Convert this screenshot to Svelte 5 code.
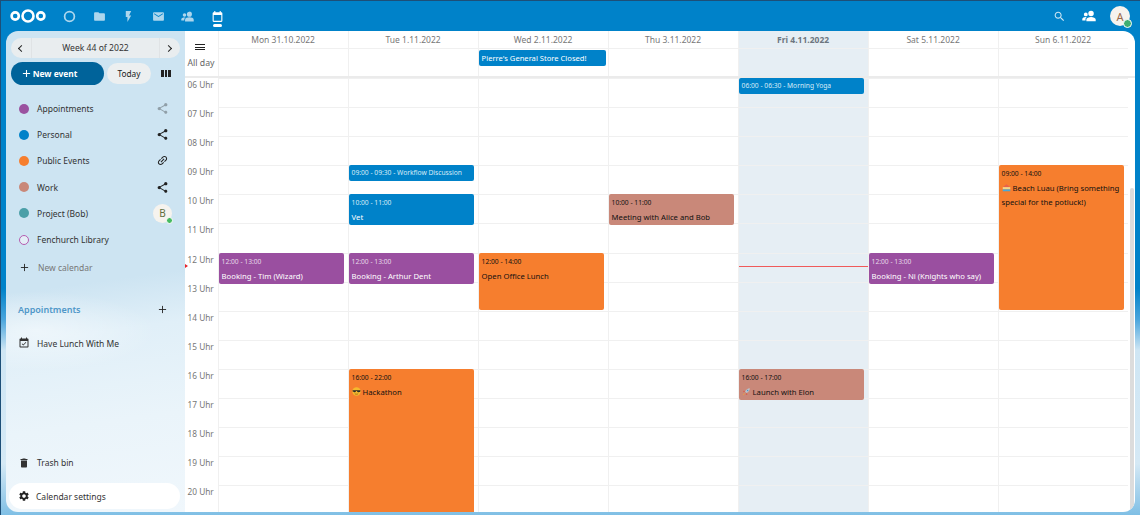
<script lang="ts">
	const icons = {
		folder: 'M10 4H4c-1.1 0-2 .9-2 2v12c0 1.1.9 2 2 2h16c1.1 0 2-.9 2-2V8c0-1.1-.9-2-2-2h-8l-2-2z',
		bolt: 'M7 2v11h3v9l7-12h-4l4-8z',
		mail: 'M20 4H4c-1.1 0-2 .9-2 2v12c0 1.1.9 2 2 2h16c1.1 0 2-.9 2-2V6c0-1.1-.9-2-2-2zm0 4l-8 5-8-5V6l8 5 8-5v2z',
		group: 'M15.500 3a4.700 4.700 0 1 1 0 9.400 4.700 4.700 0 0 1 0-9.400zM6.500 6a3.300 3.300 0 1 1 0 6.600 3.300 3.300 0 0 1 0-6.600zM15.500 13.500c3.800 0 8 1.600 8 4.300V21H7.500v-3.200c0-2.700 4.200-4.300 8-4.300zM6.500 13.800c.6 0 1.200 0 1.700.1-1.300 1-2.200 2.300-2.200 3.900v1.700H.5v-2.300c0-2.200 3-3.400 6-3.400z',
		calendar: 'M19 4h-1V2h-2v2H8V2H6v2H5c-1.11 0-2 .9-2 2v14c0 1.1.89 2 2 2h14c1.1 0 2-.9 2-2V6c0-1.1-.9-2-2-2zm0 16H5V9h14v11z',
		share: 'M18 16.08c-.76 0-1.44.3-1.96.77L8.91 12.7c.05-.23.09-.46.09-.7s-.04-.47-.09-.7l7.05-4.11c.54.5 1.25.81 2.04.81 1.66 0 3-1.34 3-3s-1.34-3-3-3-3 1.34-3 3c0 .24.04.47.09.7L8.04 9.81C7.5 9.31 6.79 9 6 9c-1.66 0-3 1.34-3 3s1.34 3 3 3c.79 0 1.5-.31 2.04-.81l7.12 4.16c-.05.21-.08.43-.08.65 0 1.61 1.31 2.92 2.92 2.92s2.92-1.31 2.92-2.92-1.31-2.92-2.92-2.92z',
		link: 'M3.9 12c0-1.71 1.39-3.1 3.1-3.1h4V7H7c-2.76 0-5 2.24-5 5s2.24 5 5 5h4v-1.9H7c-1.71 0-3.1-1.39-3.1-3.1zM8 13h8v-2H8v2zm9-6h-4v1.9h4c1.71 0 3.1 1.39 3.1 3.1s-1.39 3.1-3.1 3.1h-4V17h4c2.76 0 5-2.24 5-5s-2.24-5-5-5z',
		trash: 'M6 19c0 1.1.9 2 2 2h8c1.1 0 2-.9 2-2V7H6v12zM19 4h-3.5l-1-1h-5l-1 1H5v2h14V4z',
		cog: 'M19.14 12.94c.04-.3.06-.61.06-.94 0-.32-.02-.64-.07-.94l2.03-1.58c.18-.14.23-.41.12-.61l-1.92-3.32c-.12-.22-.37-.29-.59-.22l-2.39.96c-.5-.38-1.03-.7-1.62-.94l-.36-2.54c-.04-.24-.24-.41-.48-.41h-3.84c-.24 0-.43.17-.47.41l-.36 2.54c-.59.24-1.13.57-1.62.94l-2.39-.96c-.22-.08-.47 0-.59.22L2.74 8.87c-.12.21-.08.47.12.61l2.03 1.58c-.05.3-.09.63-.09.94s.02.64.07.94l-2.03 1.58c-.18.14-.23.41-.12.61l1.92 3.32c.12.22.37.29.59.22l2.39-.96c.5.38 1.03.7 1.62.94l.36 2.54c.05.24.24.41.48.41h3.84c.24 0 .44-.17.47-.41l.36-2.54c.59-.24 1.13-.56 1.62-.94l2.39.96c.22.08.47 0 .59-.22l1.92-3.32c.12-.22.07-.47-.12-.61l-2.01-1.58zM12 15.6c-1.98 0-3.6-1.62-3.6-3.6s1.62-3.6 3.6-3.6 3.6 1.62 3.6 3.6-1.62 3.6-3.6 3.6z',
		search: 'M15.5 14h-.79l-.28-.27C15.41 12.59 16 11.11 16 9.5 16 5.91 13.09 3 9.5 3S3 5.91 3 9.5 5.91 16 9.5 16c1.61 0 3.09-.59 4.23-1.57l.27.28v.79l5 4.99L20.49 19l-4.99-5zm-6 0C7.01 14 5 11.99 5 9.5S7.01 5 9.5 5 14 7.01 14 9.5 11.99 14 9.5 14z',
		check: 'M16.53 11.06L15.47 10l-4.88 4.88-2.12-2.12-1.06 1.06L10.59 17l5.94-5.94zM19 3h-1V1h-2v2H8V1H6v2H5c-1.11 0-1.99.9-1.99 2L3 19c0 1.1.89 2 2 2h14c1.1 0 2-.9 2-2V5c0-1.1-.9-2-2-2zm0 16H5V8h14v11z'
	};

	const calendars = [
		{ name: 'Appointments', color: '#9a52a0', action: 'share-off' },
		{ name: 'Personal', color: '#0082c9', action: 'share' },
		{ name: 'Public Events', color: '#f67e2e', action: 'link' },
		{ name: 'Work', color: '#c98879', action: 'share' },
		{ name: 'Project (Bob)', color: '#4b9fa8', action: 'avatar' },
		{ name: 'Fenchurch Library', color: '', action: '' }
	];

	const days = [
		'Mon 31.10.2022',
		'Tue 1.11.2022',
		'Wed 2.11.2022',
		'Thu 3.11.2022',
		'Fri 4.11.2022',
		'Sat 5.11.2022',
		'Sun 6.11.2022'
	];
	const todayIndex = 4;
	const hourHeight = 29.1;
	const hours = ['06', '07', '08', '09', '10', '11', '12', '13', '14', '15', '16', '17', '18', '19', '20'];

	const blue = 'blue', purple = 'purple', orange = 'orange', salmon = 'salmon';
	const events = [
		{ day: 4, start: 6, end: 6.5, time: '06:00 - 06:30', title: 'Morning Yoga', kind: blue },
		{ day: 1, start: 9, end: 9.5, time: '09:00 - 09:30', title: 'Workflow Discussion', kind: blue },
		{ day: 1, start: 10, end: 11, time: '10:00 - 11:00', title: 'Vet', kind: blue },
		{ day: 3, start: 10, end: 11, time: '10:00 - 11:00', title: 'Meeting with Alice and Bob', kind: salmon },
		{ day: 0, start: 12, end: 13, time: '12:00 - 13:00', title: 'Booking - Tim (Wizard)', kind: purple },
		{ day: 1, start: 12, end: 13, time: '12:00 - 13:00', title: 'Booking - Arthur Dent', kind: purple },
		{ day: 2, start: 12, end: 14, time: '12:00 - 14:00', title: 'Open Office Lunch', kind: orange },
		{ day: 5, start: 12, end: 13, time: '12:00 - 13:00', title: 'Booking - Ni (Knights who say)', kind: purple },
		{ day: 6, start: 9, end: 14, time: '09:00 - 14:00', title: 'Beach Luau (Bring something special for the potluck!)', kind: orange, emoji: 'beach' },
		{ day: 1, start: 16, end: 22, time: '16:00 - 22:00', title: 'Hackathon', kind: orange, emoji: 'cool' },
		{ day: 4, start: 16, end: 17, time: '16:00 - 17:00', title: 'Launch with Elon', kind: salmon, emoji: 'rocket' }
	];

	const eventsFor = (day: number) => events.filter((e) => e.day === day);
	const top = (e: { start: number }) => (e.start - 6) * hourHeight;
	const height = (e: { start: number; end: number }) =>
		e.end - e.start <= 0.5 ? 16 : Math.max((e.end - e.start) * hourHeight - 0.4, 31);
</script>

{#snippet icon(path: string, cls = '')}
	<svg class="icon {cls}" viewBox="0 0 24 24" aria-hidden="true"><path d={path} /></svg>
{/snippet}

{#snippet plus(cls = '')}
	<svg class="plus {cls}" viewBox="0 0 10 10" aria-hidden="true"><path d="M5 1v8M1 5h8" /></svg>
{/snippet}

{#snippet emoji(name: string)}
	<svg class="emoji" viewBox="0 0 12 12" aria-hidden="true">
		{#if name === 'cool'}
			<circle cx="6" cy="6" r="5.6" fill="#f5b82e" />
			<path d="M.8 4.2h10.4v1.2c0 1-1 1.6-2.2 1.6S6.8 6.200 6.600 5.200h-1.200C5.200 6.200 4.200 7 3 7S.8 6.400.8 5.400z" fill="#2b2b2b" />
			<path d="M3.800 9c1.400.8 3 .8 4.400 0" stroke="#7a4a12" stroke-width=".8" fill="none" />
		{:else if name === 'beach'}
			<path d="M1 5.500 6 1.500l5 4z" fill="#e8614d" />
			<rect x="1" y="5.500" width="10" height="3" fill="#f2d58a" />
			<rect x="1" y="8.500" width="10" height="2.500" fill="#4aa8d8" />
		{:else}
			<path d="M10.500 1.500c-3 .2-5 1.800-6.400 4.400l2 2c2.600-1.400 4.200-3.400 4.400-6.400z" fill="#b9c3cc" />
			<circle cx="7.500" cy="4.500" r="1" fill="#4a90c9" />
			<path d="M4 6 1.500 7l1-2.500zM6 8 5 10.500 7.500 9.500z" fill="#d9503f" />
			<path d="M3.500 8.500 1.500 10.500" stroke="#f2a33a" stroke-width="1.200" />
		{/if}
	</svg>
{/snippet}

<div class="app">
	<header class="topbar">
		<svg class="logo" viewBox="0 0 36 18" aria-hidden="true">
			<circle cx="5.200" cy="9" r="3.600" />
			<circle cx="18" cy="9" r="5.500" />
			<circle cx="30.800" cy="9" r="3.600" />
		</svg>
		<nav class="apps">
			<span class="app-slot dim"><svg class="icon ring" viewBox="0 0 24 24" aria-hidden="true"><circle cx="12" cy="12" r="9" /></svg></span>
			<span class="app-slot dim">{@render icon(icons.folder)}</span>
			<span class="app-slot dim">{@render icon(icons.bolt)}</span>
			<span class="app-slot dim">{@render icon(icons.mail)}</span>
			<span class="app-slot dim">{@render icon(icons.group)}</span>
			<span class="app-slot active">{@render icon(icons.calendar)}</span>
		</nav>
		<div class="top-right">
			<span class="search">{@render icon(icons.search)}</span>
			<span class="contacts">{@render icon(icons.group)}</span>
			<span class="avatar big">A<i class="status"></i></span>
		</div>
	</header>

	<div class="content">
		<aside class="sidebar">
			<div class="week-pill">
				<span class="chev left"></span>
				<span class="week-label">Week 44 of 2022</span>
				<span class="chev right"></span>
			</div>
			<div class="actions">
				<button class="new-event">{@render plus('white')} New event</button>
				<button class="today">Today</button>
				<span class="view-icon"><i></i><i></i><i></i></span>
			</div>

			<ul class="cal-list">
				{#each calendars as cal}
					<li class="cal-row">
						{#if cal.color}
							<span class="dot" style="background: {cal.color}"></span>
						{:else}
							<span class="dot hollow"></span>
						{/if}
						<span class="cal-name">{cal.name}</span>
						{#if cal.action === 'share' || cal.action === 'share-off'}
							<span class="cal-action" class:faded={cal.action === 'share-off'}>{@render icon(icons.share)}</span>
						{:else if cal.action === 'link'}
							<span class="cal-action link">{@render icon(icons.link)}</span>
						{:else if cal.action === 'avatar'}
							<span class="avatar small">B<i class="status"></i></span>
						{/if}
					</li>
				{/each}
				<li class="cal-row new-cal">
					{@render plus()}
					<span class="cal-name">New calendar</span>
				</li>
			</ul>

			<div class="section-head">
				<span>Appointments</span>
				{@render plus()}
			</div>
			<div class="cal-row lunch">
				{@render icon(icons.check, 'row-icon')}
				<span class="cal-name">Have Lunch With Me</span>
			</div>

			<div class="spacer"></div>

			<div class="cal-row trash">
				{@render icon(icons.trash, 'row-icon')}
				<span class="cal-name">Trash bin</span>
			</div>
			<div class="settings">
				{@render icon(icons.cog)}
				<span>Calendar settings</span>
			</div>
		</aside>

		<main class="calendar">
			<div class="head-row">
				<div class="gutter menu-cell"><span class="burger"><i></i><i></i><i></i></span></div>
				{#each days as day, i}
					<div class="day-head" class:today-col={i === todayIndex}>{day}</div>
				{/each}
			</div>
			<div class="allday-row">
				<div class="gutter allday-label">All day</div>
				{#each days as _, i}
					<div class="allday-cell" class:today-col={i === todayIndex}>
						{#if i === 2}
							<div class="allday-event">Pierre's General Store Closed!</div>
						{/if}
					</div>
				{/each}
			</div>
			<div class="separator"></div>
			<div class="scroller">
				<div class="time-grid">
					<div class="gutter labels">
						{#each hours as h}
							<div class="hour-label">{h} Uhr</div>
						{/each}
						<span class="now-arrow"></span>
					</div>
					{#each days as _, i}
						<div class="day-col" class:today-col={i === todayIndex}>
							{#each hours as h}
								<div class="slot"></div>
							{/each}
							{#if i === todayIndex}
								<div class="now-line"></div>
							{/if}
							{#each eventsFor(i) as e}
								<div
									class="event {e.kind}"
									class:inline={e.end - e.start <= 0.5}
									style="top: {top(e)}px; height: {height(e)}px"
								>
									{#if e.end - e.start <= 0.5}
										<div class="ev-time">{e.time} - {e.title}</div>
									{:else}
										<div class="ev-time">{e.time}</div>
										<div class="ev-title">
											{#if e.emoji}{@render emoji(e.emoji)}{/if}{e.title}
										</div>
									{/if}
								</div>
							{/each}
						</div>
					{/each}
				</div>
				<div class="scrollbar"><div class="thumb"></div></div>
			</div>
		</main>
	</div>
</div>

<style>
	:global(body) {
		margin: 0;
		background: #0082c9;
	}

	.app {
		width: 1140px;
		height: 515px;
		box-sizing: border-box;
		overflow: hidden;
		display: flex;
		flex-direction: column;
		font-family: 'Noto Sans', 'Open Sans', sans-serif;
		color: #222;
		background: linear-gradient(180deg, #0082c9 0, #0082c9 56%, #4aa5dc 62%, #cfe6f4 68%, #d5e9f5 90%, #7fbfe5 100%);
		box-shadow: inset 1px 1px 0 #1d4f78;
	}

	.icon {
		display: block;
		width: 100%;
		height: 100%;
		fill: currentColor;
	}
	.plus {
		width: 10px;
		height: 10px;
		flex: none;
		fill: none;
		stroke: #222;
		stroke-width: 1;
	}
	.plus.white {
		stroke: #fff;
		stroke-width: 1.2;
	}

	/* top bar */
	.topbar {
		height: 31px;
		flex: none;
		display: flex;
		align-items: center;
		padding: 1px 10px 0 10px;
		box-sizing: border-box;
		color: #fff;
	}
	.logo {
		width: 36px;
		height: 18px;
		fill: none;
		stroke: #fff;
		stroke-width: 2.600;
		flex: none;
	}
	.apps {
		display: flex;
		margin-left: 17px;
	}
	.app-slot {
		width: 13px;
		height: 13px;
		margin-right: 16.600px;
		position: relative;
		display: block;
	}
	.app-slot.dim {
		opacity: 0.68;
	}
	.ring {
		fill: none;
		stroke: #fff;
		stroke-width: 3.200;
	}
	.app-slot.active::after {
		content: '';
		position: absolute;
		left: 2px;
		right: 2px;
		bottom: -4px;
		height: 2.500px;
		border-radius: 2px;
		background: #fff;
	}
	.top-right {
		margin-left: auto;
		display: flex;
		align-items: center;
	}
	.search {
		width: 13px;
		height: 13px;
		margin-right: 16px;
		opacity: 0.8;
	}
	.contacts {
		width: 14px;
		height: 14px;
		margin-right: 14px;
	}
	.avatar {
		position: relative;
		display: flex;
		align-items: center;
		justify-content: center;
		border-radius: 50%;
		background: #f6f3ee;
		flex: none;
	}
	.avatar.big {
		width: 20px;
		height: 20px;
		color: #9a6a4c;
		font-size: 11px;
	}
	.avatar.big .status {
		width: 7px;
		height: 7px;
		right: -2px;
		bottom: -2px;
		border: 1px solid #fff;
		background: #3fae72;
	}
	.avatar.small {
		width: 19px;
		height: 19px;
		color: #5e7040;
		font-size: 10px;
		margin-left: auto;
		margin-right: -3px;
	}
	.status {
		position: absolute;
		right: -1px;
		bottom: -1px;
		width: 5px;
		height: 5px;
		border-radius: 50%;
		background: #46ba61;
		border: 1px solid #fff;
	}

	.content {
		flex: 1;
		display: flex;
		padding: 0 5px 3px 6px;
		min-height: 0;
	}

	/* sidebar */
	.sidebar {
		width: 179px;
		flex: none;
		display: flex;
		flex-direction: column;
		box-sizing: border-box;
		padding: 7px 5px 3px 5px;
		border-radius: 12px 0 0 12px;
		background:
			radial-gradient(ellipse 120px 40px at 30px 300px, rgba(255, 255, 255, 0.5), transparent),
			linear-gradient(172deg, #cde4f2 0, #cde4f2 52%, #e0eff8 62%, #eaf4fa 80%, #f0f7fc 100%);
		font-size: 8.500px;
	}
	.week-pill {
		height: 20px;
		display: flex;
		align-items: center;
		border-radius: 10px;
		background: #e9edef;
		color: #333;
		font-size: 8.600px;
		flex: none;
	}
	.week-label {
		flex: 1;
		text-align: center;
		border-left: 1px solid #e0e3e5;
		border-right: 1px solid #e0e3e5;
		line-height: 20px;
	}
	.chev {
		width: 20px;
		height: 20px;
		position: relative;
		flex: none;
	}
	.chev::after {
		content: '';
		position: absolute;
		top: 7.500px;
		width: 4px;
		height: 4px;
		border-top: 1.200px solid #222;
		border-left: 1.200px solid #222;
	}
	.chev.left::after {
		left: 8px;
		transform: rotate(-45deg);
	}
	.chev.right::after {
		left: 6px;
		transform: rotate(135deg);
	}
	.actions {
		display: flex;
		align-items: center;
		margin-top: 4px;
		height: 23px;
		flex: none;
	}
	button {
		font: inherit;
		border: 0;
		padding: 0;
	}
	.new-event {
		width: 93px;
		height: 23px;
		border-radius: 12px;
		background: #00639a;
		color: #fff;
		font-weight: 700;
		font-size: 8.400px;
		display: flex;
		align-items: center;
		justify-content: center;
		gap: 2px;
		padding-right: 16px;
		box-sizing: border-box;
	}
	.new-event :global(.plus) {
		width: 9px;
		height: 9px;
	}
	.today {
		width: 44px;
		height: 21px;
		margin-left: 3px;
		border-radius: 11px;
		background: #eceff0;
		color: #222;
		font-size: 8.300px;
	}
	.view-icon {
		display: flex;
		gap: 1px;
		margin-left: 10px;
	}
	.view-icon i {
		width: 2.500px;
		height: 7px;
		background: #222;
	}

	.cal-list {
		list-style: none;
		margin: 10.500px 0 0;
		padding: 0;
	}
	.cal-row {
		height: 26.200px;
		display: flex;
		align-items: center;
		padding-left: 8px;
		padding-right: 11px;
		color: #333;
	}
	.dot {
		width: 10px;
		height: 10px;
		border-radius: 50%;
		flex: none;
	}
	.dot.hollow {
		box-sizing: border-box;
		border: 1px solid #b45cb0;
		background: #e4eef7;
	}
	.cal-name {
		margin-left: 8px;
	}
	.cal-action {
		width: 13px;
		height: 13px;
		margin-left: auto;
		color: #222;
	}
	.cal-action.faded {
		opacity: 0.35;
	}
	.cal-action.link {
		transform: rotate(-45deg);
	}
	.new-cal {
		height: 30px;
		padding-left: 9px;
	}
	.new-cal .cal-name {
		color: #777;
		margin-left: 9px;
	}
	.new-cal :global(.plus) {
		width: 9px;
		height: 9px;
	}
	.section-head {
		display: flex;
		align-items: center;
		justify-content: space-between;
		margin-top: 19.500px;
		padding: 0 13px 0 7px;
		height: 14px;
		font-size: 9px;
		font-weight: 600;
		color: #4f97c8;
	}
	.section-head :global(.plus) {
		width: 9px;
		height: 9px;
	}
	.lunch {
		margin-top: 14px;
	}
	:global(.row-icon) {
		width: 12px !important;
		height: 12px !important;
		flex: none;
		margin-left: -1px;
	}
	.lunch .cal-name,
	.trash .cal-name {
		margin-left: 7px;
	}
	.spacer {
		flex: 1;
	}
	.trash {
		flex: none;
		margin-bottom: 7px;
	}
	.settings {
		height: 26px;
		flex: none;
		margin: 0 0 0 -2px;
		border-radius: 13px;
		background: #fff;
		display: flex;
		align-items: center;
		gap: 6px;
		padding-left: 9px;
		color: #333;
	}
	.settings :global(.icon) {
		width: 12px;
		height: 12px;
		color: #222;
	}

	/* calendar */
	.calendar {
		flex: 1;
		min-width: 0;
		display: flex;
		flex-direction: column;
		background: #fff;
		border-radius: 0 12px 12px 0;
		overflow: hidden;
		font-size: 8.500px;
		color: #777;
	}
	.head-row,
	.allday-row,
	.time-grid {
		display: grid;
		grid-template-columns: 32.600px repeat(7, 130px);
		flex: none;
	}
	.gutter {
		box-sizing: border-box;
	}
	.head-row {
		height: 18px;
	}
	.menu-cell {
		display: flex;
		align-items: flex-end;
		padding: 0 0 0 10px;
	}
	.burger {
		display: flex;
		flex-direction: column;
		gap: 1.500px;
		margin-bottom: -1px;
	}
	.burger i {
		display: block;
		width: 10px;
		height: 1px;
		background: #222;
	}
	.day-head {
		text-align: center;
		line-height: 17px;
		border-left: 1px solid #f0f0f0;
		border-bottom: 1px solid #f0f0f0;
		color: #777;
	}
	.day-head.today-col {
		font-weight: 700;
		color: #6d7680;
	}
	.today-col {
		background: #e6eef4;
	}
	.allday-row {
		height: 27px;
	}
	.allday-label {
		padding: 7.500px 0 0 2.500px;
		font-size: 8.700px;
		color: #666;
	}
	.allday-cell {
		border-left: 1px solid #f0f0f0;
		padding: 1px 2px 0 0;
	}
	.allday-event {
		height: 16px;
		line-height: 16px;
		border-radius: 2px;
		background: #0082c9;
		color: #fff;
		padding-left: 3px;
		font-size: 7.600px;
		white-space: nowrap;
	}
	.separator {
		height: 2px;
		flex: none;
		background: #ebebeb;
	}
	.scroller {
		flex: 1;
		min-height: 0;
		display: flex;
		overflow: hidden;
		position: relative;
	}
	.labels {
		position: relative;
	}
	.hour-label {
		height: 29.100px;
		box-sizing: border-box;
		padding: 1px 0 0 2.500px;
		font-size: 8.300px;
		color: #777;
		line-height: 12px;
	}
	.now-arrow {
		position: absolute;
		left: 0;
		top: 186px;
		border-left: 3.500px solid #e8252b;
		border-top: 2.500px solid transparent;
		border-bottom: 2.500px solid transparent;
	}
	.day-col {
		position: relative;
		border-left: 1px solid #f0f0f0;
	}
	.slot {
		height: 29.100px;
		box-sizing: border-box;
		border-top: 1px solid #f0f0f0;
	}
	.now-line {
		position: absolute;
		left: 0;
		right: 0;
		top: 187.500px;
		height: 1px;
		background: #f05a5a;
	}
	.event {
		position: absolute;
		left: 0;
		right: 4px;
		box-sizing: border-box;
		padding: 4px 3px 0;
		border-radius: 2px;
		overflow: hidden;
		color: #111;
		font-size: 7.700px;
	}
	.event.blue {
		background: #0082c9;
		color: #fff;
	}
	.event.purple {
		background: #9a4fa0;
		color: #fff;
	}
	.event.orange {
		background: #f67e2e;
	}
	.event.salmon {
		background: #c98879;
	}
	.event.inline {
		padding-top: 3px;
	}
	.ev-time {
		font-size: 6.700px;
		line-height: 9px;
		white-space: nowrap;
	}
	.purple .ev-time {
		color: #e6d9e8;
	}
	.blue .ev-time {
		color: #d8ecf7;
	}
	.ev-title {
		margin-top: 2px;
		line-height: 14px;
		padding-top: 1px;
		font-weight: 400;
	}
	.emoji {
		width: 9px;
		height: 9px;
		vertical-align: -1px;
		margin-right: 2px;
	}
	.scrollbar {
		position: absolute;
		top: 0;
		right: 0;
		bottom: 0;
		width: 5px;
	}
	.thumb {
		position: absolute;
		left: 0;
		top: 110px;
		bottom: 0;
		width: 4px;
		background: #dcdcdc;
		border-radius: 2px;
	}
</style>
